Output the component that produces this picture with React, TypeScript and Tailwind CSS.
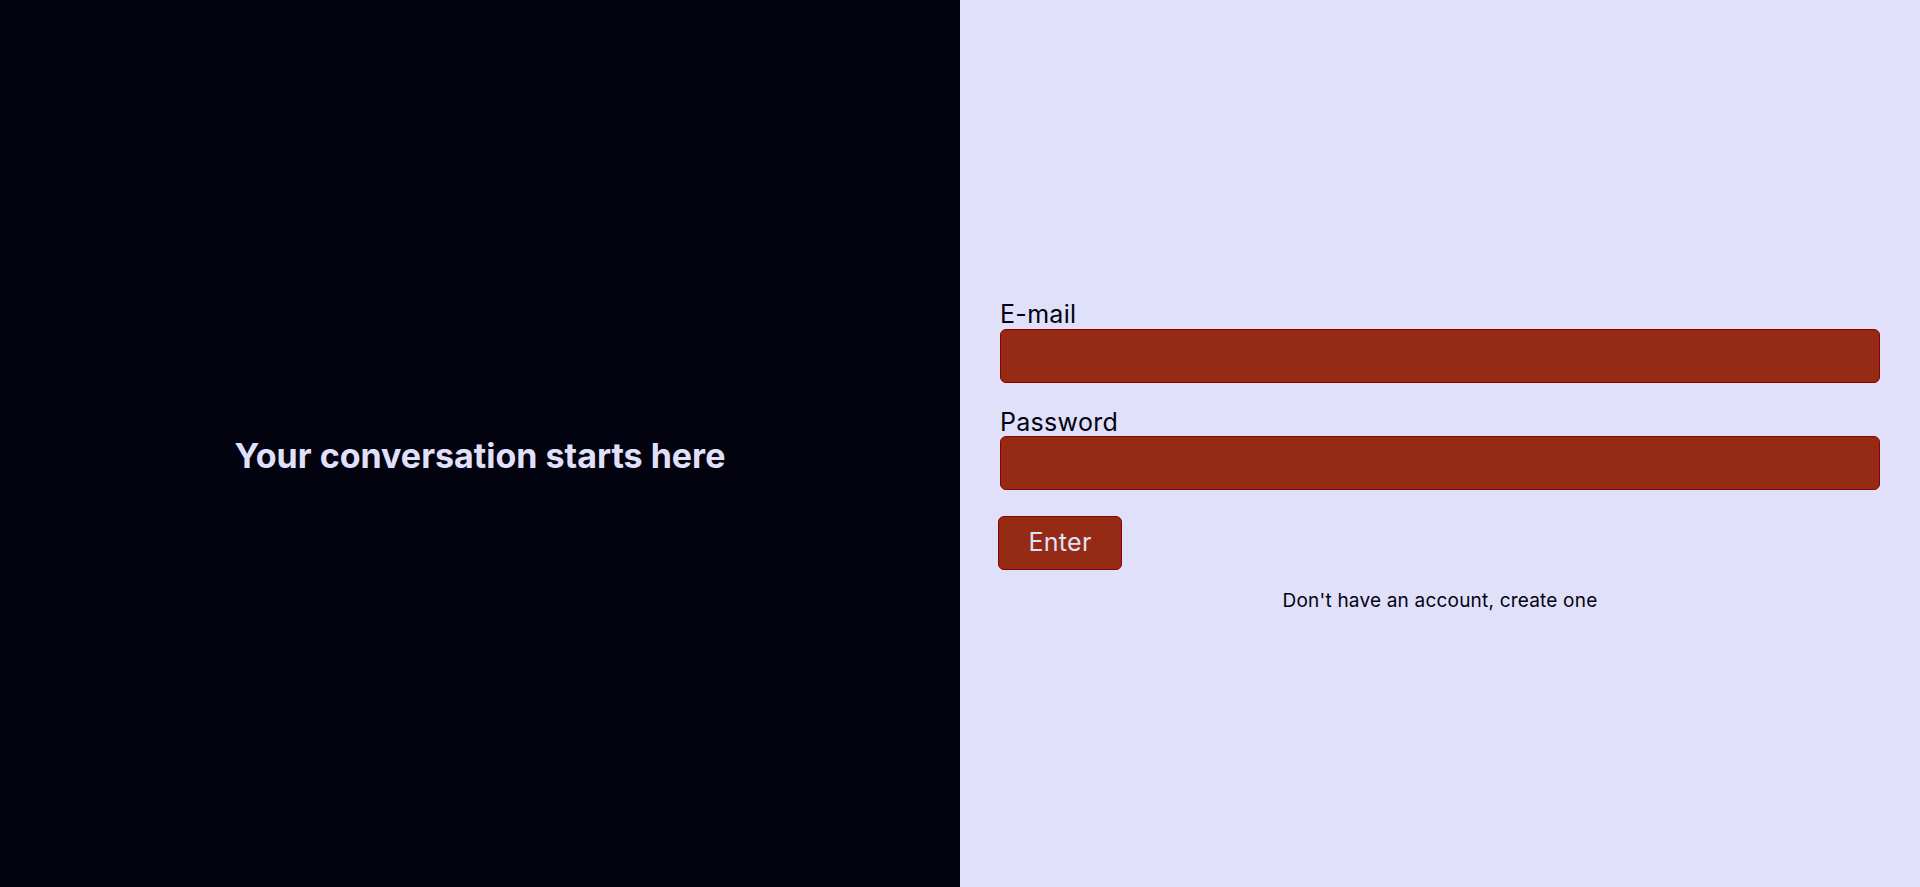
export default function App() {
  return (
    <div
      className="flex h-[887px] w-full"
      style={{ fontFamily: 'Inter, "Noto Sans", sans-serif' }}
    >
      <div className="flex w-1/2 items-center justify-center bg-[#03020f] pt-[24px]">
        <h1 className="text-[34px] leading-10 font-bold text-[#e0e0fa]">Your conversation starts here</h1>
      </div>

      <div className="flex w-1/2 flex-col justify-center bg-[#e0e0fa] px-10 pt-[27px]">
        <label className="text-[25px] leading-7 tracking-[0.3px] text-[#03020f]">E-mail</label>
        <input
          type="email"
          className="mt-[1px] h-[54px] w-full rounded-md border border-[#8b0000] bg-[#952a15] px-3 text-white outline-none"
        />

        <label className="mt-[25px] text-[25px] leading-7 tracking-[0.3px] text-[#03020f]">Password</label>
        <input
          type="password"
          className="h-[54px] w-full rounded-md border border-[#8b0000] bg-[#952a15] px-3 text-white outline-none"
        />

        <div className="mt-[26px]">
          <button className="-ml-[2px] h-[54px] w-[124px] rounded-md border border-[#8b0000] bg-[#952a15] text-[25px] tracking-[0.3px] text-[#e0e0fa]">
            Enter
          </button>
        </div>

        <p className="mt-[17px] text-center text-[19px] leading-7 tracking-[0.2px] text-[#03020f]">
          Don't have an account, create one
        </p>
      </div>
    </div>
  );
}
